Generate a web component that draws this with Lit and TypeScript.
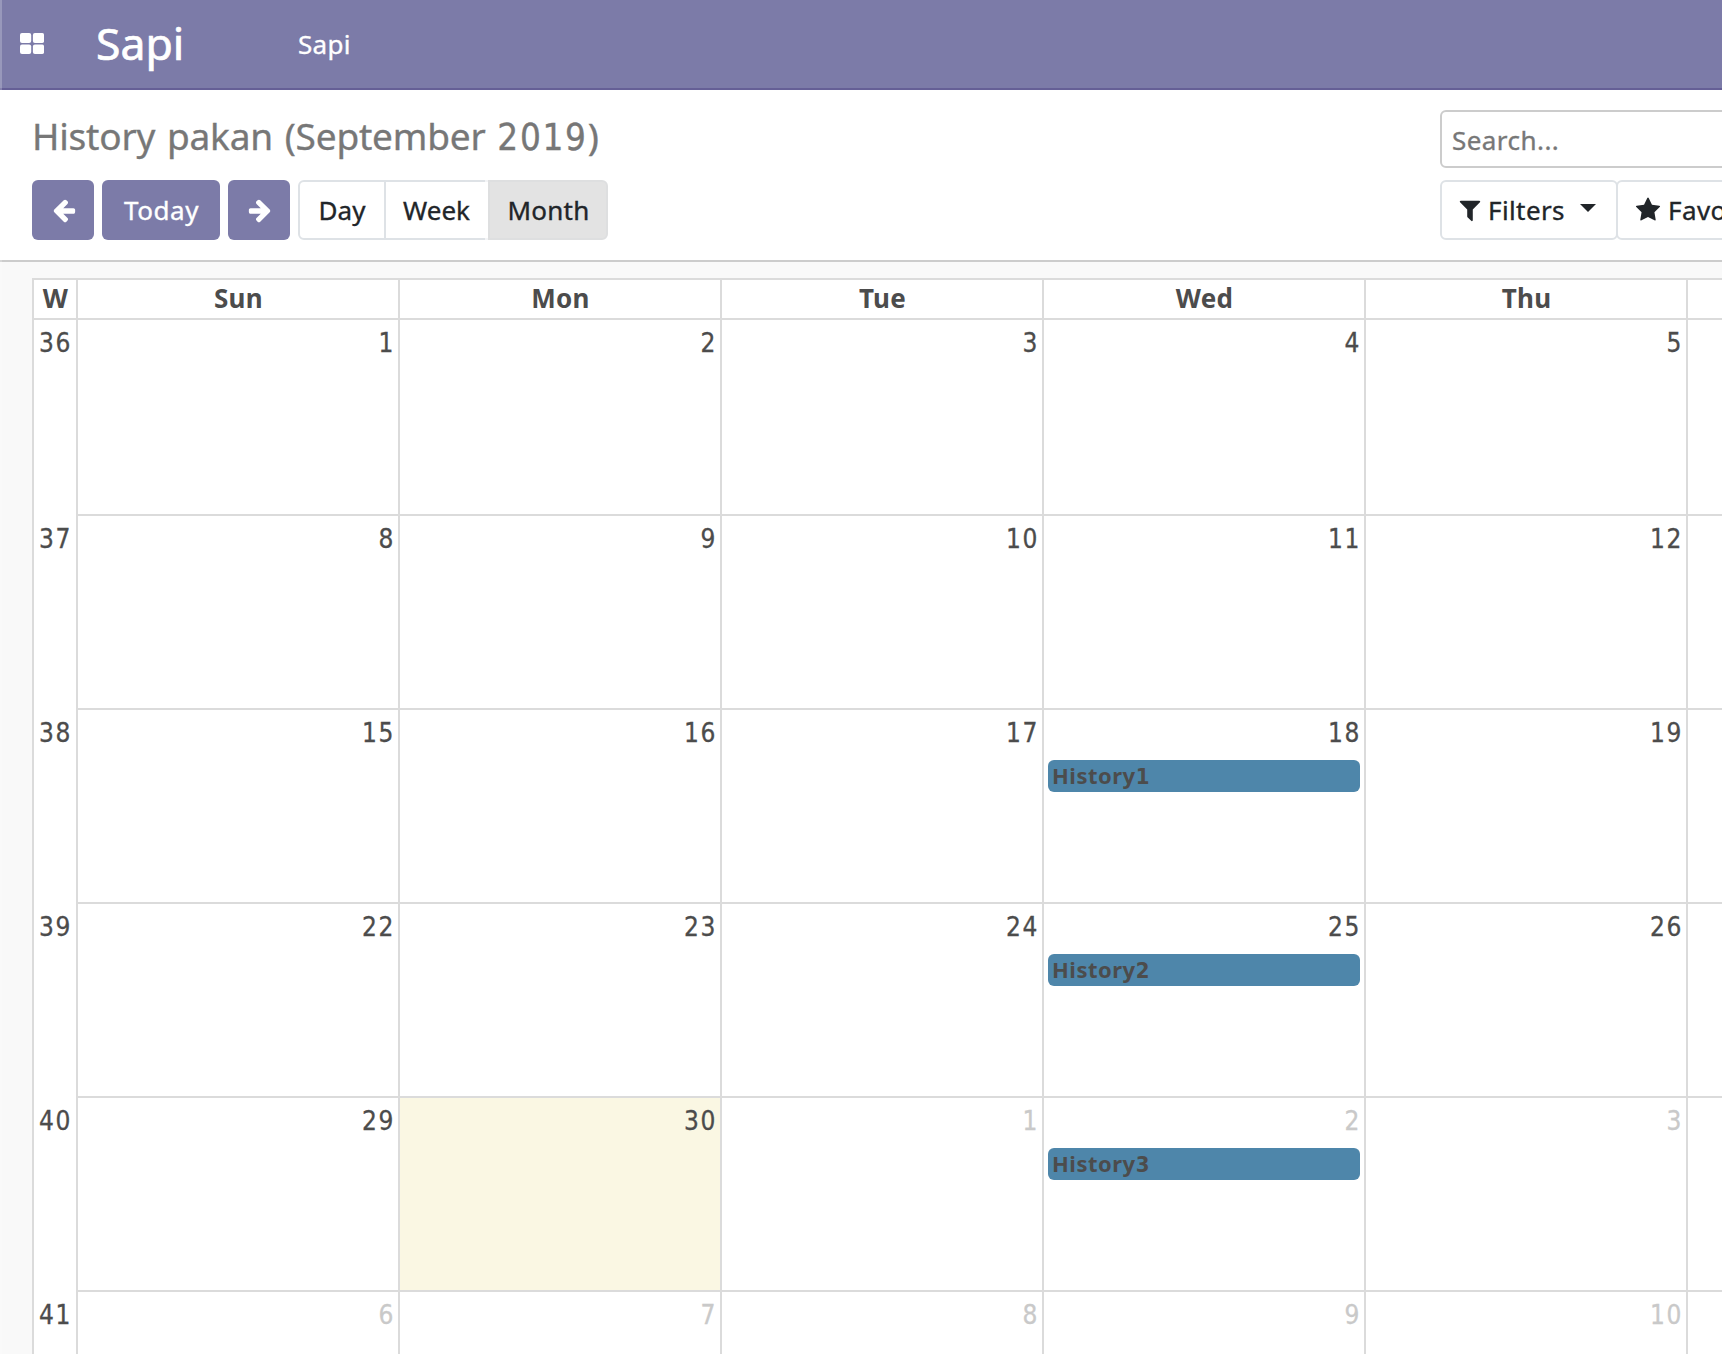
import {LitElement, html, css, svg} from "lit";
import {customElement} from "lit/decorators.js";
import {classMap} from "lit/directives/class-map.js";

const ARROW = "M1664 896v128q0 53-32.5 90.5t-84.5 37.5h-704l293 294q38 36 38 90t-38 90l-75 76q-37 37-90 37-52 0-91-37l-651-652q-37-37-37-90 0-52 37-91l651-650q38-38 91-38 52 0 90 38l75 74q38 38 38 91t-38 91l-293 293h704q52 0 84.5 37.5t32.5 90.5z";
const FUNNEL = "M1595 295q17 41-14 70l-493 493v742q0 42-39 59-13 5-25 5-27 0-45-19l-256-256q-19-19-19-45v-486l-493-493q-31-29-14-70 17-39 59-39h1280q42 0 59 39z";
const STAR = "M1728 647q0 22-26 48l-363 354 86 500q1 7 1 20 0 21-10.5 35.5t-30.5 14.5q-19 0-40-12l-449-236-449 236q-22 12-40 12-21 0-31.5-14.5t-10.5-35.5q0-6 2-20l86-500-364-354q-25-27-25-48 0-37 56-46l502-73 225-455q19-41 49-41t49 41l225 455 502 73q56 9 56 46z";

const icon = (d: string, flip = false) => html`<svg class=${classMap({icon: true, flip})} viewBox="0 0 1792 1792">${svg`<path d=${d}></path>`}</svg>`;

interface Day { n: number; other?: boolean; today?: boolean; event?: string; }
interface Week { no: number; days: Day[]; }

const DAYS = ["Sun", "Mon", "Tue", "Wed", "Thu"];
const WEEKS: Week[] = [
  {no: 36, days: [{n: 1}, {n: 2}, {n: 3}, {n: 4}, {n: 5}]},
  {no: 37, days: [{n: 8}, {n: 9}, {n: 10}, {n: 11}, {n: 12}]},
  {no: 38, days: [{n: 15}, {n: 16}, {n: 17}, {n: 18, event: "History1"}, {n: 19}]},
  {no: 39, days: [{n: 22}, {n: 23}, {n: 24}, {n: 25, event: "History2"}, {n: 26}]},
  {no: 40, days: [{n: 29}, {n: 30, today: true}, {n: 1, other: true}, {n: 2, other: true, event: "History3"}, {n: 3, other: true}]},
  {no: 41, days: [{n: 6, other: true}, {n: 7, other: true}, {n: 8, other: true}, {n: 9, other: true}, {n: 10, other: true}]},
];

@customElement("month-calendar")
export class MonthCalendar extends LitElement {
  static styles = css`
    :host { display: block; padding: 16px 0 0 32px; color: #4c4c4c; }
    .table { width: 1978px; border: 2px solid #dbdbdb; background: #fff; box-sizing: border-box; }
    .row { display: grid; grid-template-columns: 42px repeat(6, 322px); height: 194px; }
    .row.first { height: 196px; }
    .row.head { height: 40px; font-weight: 700; text-align: center; line-height: 37px; letter-spacing: .3px; }
    .row.head > div { border-bottom: 2px solid #dbdbdb; border-left: 2px solid #dbdbdb; padding-left: 1px; }
    .row.head > .w { border-left: 0; }
    .num, .no { font-family: "DejaVu Sans Condensed", "DejaVu Sans", sans-serif; line-height: 46px; height: 46px;
      font-size: 26px; letter-spacing: 1.6px; -webkit-text-stroke: .3px currentColor; }
    .no { text-align: center; padding-left: 1px; }
    .num { text-align: right; padding-right: 3px; }
    .cell { border-left: 2px solid #dbdbdb; border-bottom: 2px solid #dbdbdb; }
    .today { background: #faf7e3; }
    .other .num { color: #c9c9c9; }
    .event { margin: 4px 4px 0; height: 32px; line-height: 31px; border-radius: 6px; background: #4e86aa;
      padding-left: 4px; font-size: 22px; font-weight: 700; letter-spacing: .5px; }
    .digit { font-family: "DejaVu Sans Condensed", "DejaVu Sans", sans-serif; font-size: 22px; }
  `;
  render() {
    return html`<div class="table">
      <div class="row head"><div class="w">W</div>${DAYS.map(d => html`<div>${d}</div>`)}<div></div></div>
      ${WEEKS.map((w, i) => html`<div class=${classMap({row: true, first: i === 0})}>
        <div class="no">${w.no}</div>
        ${w.days.map(d => html`<div class=${classMap({cell: true, today: !!d.today, other: !!d.other})}>
          <div class="num">${d.n}</div>
          ${d.event ? html`<div class="event">${d.event.slice(0, -1)}<span class="digit">${d.event.slice(-1)}</span></div>` : ""}
        </div>`)}
        <div class="cell"></div>
      </div>`)}
    </div>`;
  }
}

@customElement("app-root")
export class AppRoot extends LitElement {
  static styles = css`
    :host { display: block; width: 100%; height: 1354px; overflow: hidden; position: relative; background: #f9f9f9;
      font-family: "Noto Sans", sans-serif; font-size: 26px; color: #212529; white-space: nowrap; }
    .edge { position: absolute; left: 0; top: 0; width: 2px; height: 100%; background: rgba(255, 255, 255, .22); }
    .icon { width: 26px; height: 26px; fill: currentColor; stroke: none; display: block; flex: none; }
    .flip { transform: scaleX(-1); }
    .nav, .panel { -webkit-text-stroke: .35px currentColor; }
    .nav { box-sizing: border-box; height: 90px; background: #7c7ba8; border-bottom: 2px solid #655f96; color: #fff;
      display: flex; align-items: center; padding-left: 20px; }
    .apps { width: 24px; height: 21px; fill: #fff; flex: none; margin-top: -1px; }
    .brand { font-size: 44.5px; line-height: 86px; height: 88px; margin-left: 52px; width: 202px; -webkit-text-stroke-width: .7px; }
    .menu { line-height: 88px; letter-spacing: .3px; }
    .panel { box-sizing: border-box; height: 172px; background: #fff; border-bottom: 2px solid #ccc;
      display: grid; grid-template-columns: 1408px 500px; grid-template-rows: 58px 60px; row-gap: 12px; padding: 20px 0 0 32px; }
    .title { font-size: 37px; line-height: 51px; color: #777; word-spacing: 2.4px; letter-spacing: -.2px; }
    .year { font-family: "DejaVu Sans Condensed", "DejaVu Sans", sans-serif; font-size: 36.5px; letter-spacing: 1.7px; }
    .search { box-sizing: border-box; height: 58px; border: 2px solid #ccc; border-radius: 6px; padding: 1px 0 0 10px;
      line-height: 54px; color: #777; letter-spacing: .45px; }
    .tools { display: flex; }
    .btn { box-sizing: border-box; height: 60px; line-height: 60px; border-radius: 6px; background: #7c7ba8; color: #fff;
      display: flex; align-items: center; justify-content: center; margin-right: 8px; width: 62px; padding-left: 1px; }
    .wide { width: 118px; letter-spacing: .6px; }
    .seg { box-sizing: border-box; height: 60px; line-height: 56px; border: 2px solid #dee2e6; text-align: center; }
    .d { width: 88px; border-radius: 6px 0 0 6px; }
    .w { width: 102px; border-left: 0; border-right: 0; padding-right: 1px; border-image: linear-gradient(90deg, #dee2e6 97px, #f3f4f6 97px) 2; border-image-width: 2px 0; }
    .m { width: 120px; border-radius: 0 6px 6px 0; background: #e3e3e3; border-color: #dedfe0; letter-spacing: .2px; padding-left: 1px; }
    .drop { box-sizing: border-box; height: 60px; border: 2px solid #dee2e6; border-radius: 6px; line-height: 56px;
      display: flex; align-items: center; padding-left: 15px; letter-spacing: .4px; gap: 5px; }
    .filters { width: 178px; }
    .fav { width: 220px; margin-left: -2px; padding-left: 17px; gap: 7px; }
    .caret { border: 8px solid transparent; border-top-color: currentColor; border-bottom: 0; margin: -4px 0 0 10px; }
  `;
  render() {
    return html`
      <div class="nav">
        <svg class="apps" viewBox="0 0 24 21"><rect width="11.2" height="10" rx="2"></rect><rect x="12.9" width="11.2" height="10" rx="2"></rect><rect y="11.5" width="11.2" height="9.5" rx="2"></rect><rect x="12.9" y="11.5" width="11.2" height="9.5" rx="2"></rect></svg>
        <div class="brand">Sapi</div><div class="menu">Sapi</div>
      </div>
      <div class="panel">
        <div class="title">History pakan (September <span class="year">2019</span>)</div>
        <div class="search">Search...</div>
        <div class="tools">
          <div class="btn">${icon(ARROW)}</div><div class="btn wide">Today</div><div class="btn">${icon(ARROW, true)}</div>
          <div class="seg d">Day</div><div class="seg w">Week</div><div class="seg m">Month</div>
        </div>
        <div class="tools">
          <div class="drop filters">${icon(FUNNEL)}<span>Filters</span><span class="caret"></span></div>
          <div class="drop fav">${icon(STAR)}<span>Favorites</span></div>
        </div>
      </div>
      <month-calendar></month-calendar>
      <div class="edge"></div>`;
  }
}
